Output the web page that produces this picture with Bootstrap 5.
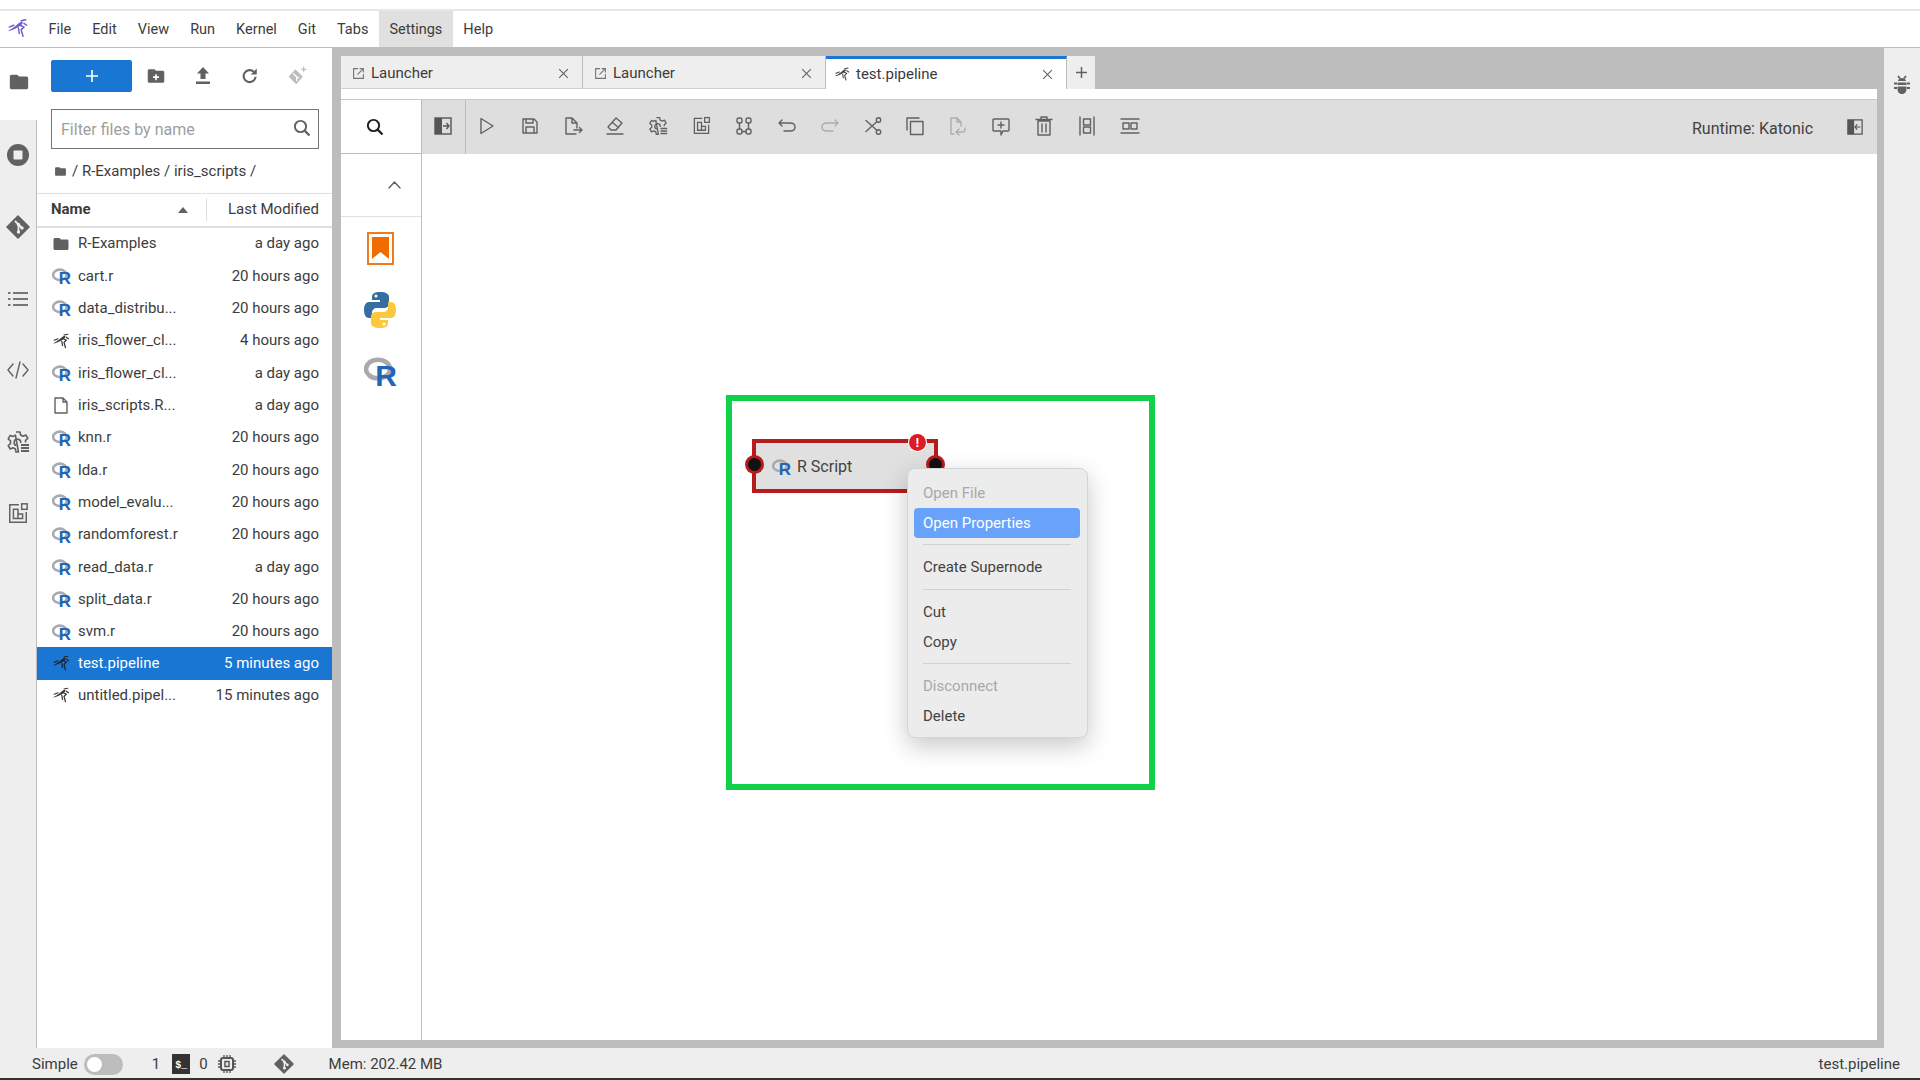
<!DOCTYPE html>
<html lang="en">

<head>
    <meta charset="UTF-8">
    <title>test.pipeline</title>
    <link href="https://cdn.jsdelivr.net/npm/bootstrap@5.3.0/dist/css/bootstrap.min.css" rel="stylesheet">
    <style>
        html, body { height: 100%; }
        body { font-family: Roboto, "Liberation Sans", sans-serif; font-size: 15px; color: #3c3c3c; background: #fff; overflow: hidden; }
        .app { height: 1080px; width: 1920px; }
        .top-strip { height: 11px; border-bottom: 2px solid #e8e8e8; }
        .menu-bar { height: 37px; border-bottom: 1px solid #bdbdbd; padding-left: 38px; position: relative; font-size: 14.5px; }
        .menu-bar .logo { position: absolute; left: 5px; top: 6px; width: 25px; height: 22px; }
        .menu-bar .nav-link { color: #3c3c3c; padding: 1px 10.5px 0; height: 36px; line-height: 36px; }
        .menu-bar .nav-link.open { background: #e0e0e0; }
        .work { height: 1000px; background: #bdbdbd; }
        .rail { width: 37px; background: #eee; }
        .rail-item { height: 71.6px; border-right: 1px solid #bdbdbd; }
        .rail-item.on { background: #fff; border-right: 0; padding-bottom: 3px; }
        .rail-fill { border-right: 1px solid #bdbdbd; }
        .rail-right { width: 36px; background: #eee; padding-top: 27px; }
        .side { width: 295px; background: #fff; }
        .side-tools { height: 61px; padding: 12px 0 0 14px; }
        .new-btn { width: 81px; height: 32px; padding: 0; border-radius: 2px; background: #1976d2; border-color: #1976d2; }
        .tool-cell { width: 47px; height: 32px; }
        .filter-box { margin: 0 13px 0 14px; height: 40px; }
        .filter-box .form-control { height: 40px; border: 1px solid #757575; border-radius: 0; font-size: 16px; padding: 0 30px 0 9px; color: #3c3c3c; }
        .filter-box .form-control::placeholder { color: #9e9e9e; }
        .filter-glass { position: absolute; right: 8px; top: 10px; }
        .crumbs { height: 44px; padding-left: 17px; gap: 5px; }
        .head-row { height: 35px; border-top: 1px solid #e0e0e0; border-bottom: 2px solid #e0e0e0; padding-bottom: 1px; }
        .head-name { width: 169px; padding: 0 18px 0 14px; font-weight: 700; }
        .head-date { flex: 1; border-left: 1px solid #e0e0e0; padding-right: 13px; text-align: right; }
        .caret-up { width: 0; height: 0; border-left: 5px solid transparent; border-right: 5px solid transparent; border-bottom: 6px solid #616161; }
        .files .list-group-item { height: 32.33px; border: 0; border-radius: 0; padding: 0 13px 1px 15px; color: #3c3c3c; background: transparent; gap: 8px; }
        .files .list-group-item.active { background: #1976d2; color: #fff; }
        .file-stamp { margin-left: auto; }
        .r-icon { position: relative; display: block; flex: none; width: 18px; height: 18px; }
        .r-icon svg { display: block; }
        .r-icon b { position: absolute; right: -1px; bottom: -1px; font: 700 17px/14px "Liberation Sans", sans-serif; color: #2165b6; }
        .r-icon.large { width: 32px; height: 32px; }
        .r-icon.large b { font-size: 30px; line-height: 24px; }
        .dock { width: 1536px; margin: 8px 7px 8px 9px; min-width: 0; }
        .tabs-row { height: 33.5px; }
        .doc-tab { width: 242px; background: #eee; border-right: 1px solid #bdbdbd; border-bottom: 1px solid #d0d0d0; padding: 3px 12px 0 11px; gap: 6px; }
        .doc-tab.second { width: 243px; }
        .doc-tab.on { background: #fff; border-top: 3px solid #1976d2; border-bottom: 0; padding: 0 12px 0 8px; width: 241px; }
        .doc-tab .tab-x { margin-left: auto; }
        .add-tab { width: 28px; background: #eee; }
        .tab-gap { height: 10.5px; background: #fff; border-bottom: 1px solid #c8c8c8; }
        .doc-body { height: 948px; background: #fff; min-height: 0; }
        .palette { width: 81px; border-right: 1px solid #bdbdbd; }
        .pal-search { height: 54px; border-bottom: 1px solid #bdbdbd; padding: 2px 12px 0 0; }
        .pal-fold { height: 63px; border-bottom: 1px solid #e0e0e0; padding-right: 20px; }
        .pal-icons { padding: 15px 2px 0 0; gap: 26px; }
        .pipe-bar { height: 54px; background: #dedede; }
        .bar-btn { width: 42.85px; height: 100%; padding-bottom: 2px; }
        .bar-btn.first { border-right: 1px solid #bdbdbd; width: 43.5px; }
        .runtime { margin-left: auto; font-size: 16px; color: #424242; margin-right: 34px; padding-top: 5px; }
        .bar-end { margin-right: 14px; }
        .canvas-area { position: relative; flex: 1; background: #fff; }
        .green-box { position: absolute; left: 304px; top: 241px; width: 429px; height: 395px; border: 6px solid #10d14a; }
        .pipe-node { position: absolute; left: 330px; top: 285px; width: 186px; height: 54px; background: #e0e0e0; border: 4px solid #b71c1c; padding: 2px 0 0 16px; gap: 7px; font-size: 16px; color: #424242; }
        .port { position: absolute; width: 13px; height: 13px; border-radius: 50%; background: #111; box-shadow: 0 0 0 3px #b71c1c; top: 15px; }
        .port.in { left: -8px; }
        .port.out { right: -8px; }
        .node-alert { position: absolute; right: 8px; top: -9px; width: 17px; height: 17px; border-radius: 50%; background: #da1e28; color: #fff; font: 700 13px/17px "Liberation Sans", sans-serif; text-align: center; box-shadow: 0 0 0 1px #fff; }
        .ctx-menu.dropdown-menu { position: absolute; left: 485px; top: 314px; width: 181px; height: 270px; min-width: 0; padding: 9px 7px 8px 6px; margin: 0; background: #ececec; border: 1px solid #d4d4d4; border-radius: 8px; box-shadow: 0 8px 24px rgba(0, 0, 0, .22); font-size: 15px; }
        .ctx-menu .dropdown-item { height: 30px; line-height: 30px; padding: 0 9px; color: #424242; border-radius: 4px; }
        .ctx-menu .dropdown-item.active { background: #69a2fa; color: #fff; }
        .ctx-menu .dropdown-item.disabled { color: #a8a8a8; }
        .ctx-menu .dropdown-divider { margin: 6.5px 9px 7px; border-color: #d2d2d2; opacity: 1; }
        .status-bar { height: 32px; background: #eee; border-bottom: 2px solid #333; padding: 2px 20px 0 32px; }
        .switch-track { width: 39px; height: 21px; border-radius: 11px; background: #bdbdbd; margin-left: 6px; padding-left: 2px; }
        .switch-knob { width: 15px; height: 15px; border-radius: 50%; background: #fff; margin-left: 1px; }
        .kernel-count { margin-left: 29px; }
        .term-icon { width: 18px; height: 20px; background: #333; color: #fff; font: 700 10px/24px "Liberation Mono", monospace; text-align: center; margin: 0 9px 0 12px; }
        .chip-icon { margin-left: 10px; }
        .git-status { margin-left: 38px; }
        .mem-use { margin-left: 35px; }
        .ico { stroke: #616161; fill: none; stroke-width: 1.4; stroke-linecap: round; stroke-linejoin: round; }
        .ico.faint { stroke: #adadad; }
        .solid { fill: #616161; stroke: none; }
    </style>
</head>

<body>
    <svg width="0" height="0" class="position-absolute">
        <symbol id="i-folder" viewBox="0 0 24 24"><path d="M10 4H4c-1.100 0-2 .9-2 2v12c0 1.100.9 2 2 2h16c1.100 0 2-.9 2-2V8c0-1.100-.9-2-2-2h-8l-2-2z"/></symbol>
        <symbol id="i-runner" viewBox="0 0 24 24">
            <path d="M1 15c4-1 7-4 10-6 2-2 4-4 7-4l-1 3-4 3-4 2-5 2z" stroke="none"/>
            <path d="M16 4l5-1M19 7l3 2M15 9l4 2-3 3 2 7M13 12l1 6M3 11l5-2" fill="none" stroke="currentColor" stroke-width="1.600" stroke-linecap="round"/>
        </symbol>
        <symbol id="i-ring" viewBox="0 0 24 24"><ellipse cx="10.500" cy="10.500" rx="9" ry="7" fill="none" stroke="#a8aab0" stroke-width="3.400"/></symbol>
        <symbol id="i-git" viewBox="0 0 24 24">
            <path d="M12 1l11 11-11 11L1 12z" fill="#616161" stroke="#616161" stroke-width="1.500" stroke-linejoin="round"/>
            <path d="M9 6l3.500 3.500v7M12.500 9.500l3.500 3.500" stroke="#eee" stroke-width="1.800" fill="none"/>
            <circle cx="12.500" cy="17" r="1.700" fill="#eee"/><circle cx="16" cy="13" r="1.700" fill="#eee"/><circle cx="12.500" cy="9.500" r="1.700" fill="#eee"/>
        </symbol>
        <symbol id="i-gear" viewBox="0 0 24 24">
            <path d="M10 2h4l.6 3 2.400 1.200 2.800-1.200 2 3.500-2.300 1.900v2M12.500 22H10l-.6-3-2.400-1.200-2.800 1.200-2-3.500L4.500 13.600v-2.800L2.200 8.900l2-3.500L7 6.400 9.400 5.200z" fill="none" stroke="#616161" stroke-width="1.600" stroke-linejoin="round"/>
            <path d="M14.700 13a3.300 3.300 0 1 0-4.200 2.600" fill="none" stroke="#616161" stroke-width="1.600"/>
            <path d="M15 15h8M15 18h8M15 21h8" stroke="#616161" stroke-width="2"/>
        </symbol>
        <symbol id="i-widget" viewBox="0 0 24 24">
            <path d="M13 3H3v19h18V11" fill="none" stroke="#616161" stroke-width="1.600"/>
            <rect x="16" y="2" width="6" height="6" fill="none" stroke="#616161" stroke-width="1.600"/>
            <path d="M7 8v10h10v-5h-5V8z" fill="none" stroke="#616161" stroke-width="1.600"/>
            <path d="M12 13v5" stroke="#616161" stroke-width="1.600"/>
        </symbol>
        <symbol id="i-x" viewBox="0 0 24 24"><path d="M4 4l16 16M20 4L4 20" fill="none" stroke="#616161" stroke-width="2"/></symbol>
        <symbol id="i-launch" viewBox="0 0 24 24">
            <path d="M11 3H3v18h18v-8" fill="none" stroke="#757575" stroke-width="2"/>
            <path d="M14 3h7v7M21 3L10 14" fill="none" stroke="#757575" stroke-width="2"/>
        </symbol>
        <symbol id="i-glass" viewBox="0 0 24 24"><circle cx="10" cy="10" r="7.500" fill="none" stroke="currentColor" stroke-width="2.600"/><path d="M15.500 15.500L22 22" stroke="currentColor" stroke-width="3"/></symbol>
    </svg>

    <div class="app d-flex flex-column">
        <div class="top-strip"></div>
        <nav class="menu-bar nav">
            <svg class="logo" viewBox="0 0 24 24" fill="#6f5bd0" color="#6f5bd0"><use href="#i-runner"/></svg>
            <a class="nav-link" href="#">File</a>
            <a class="nav-link" href="#">Edit</a>
            <a class="nav-link" href="#">View</a>
            <a class="nav-link" href="#">Run</a>
            <a class="nav-link" href="#">Kernel</a>
            <a class="nav-link" href="#">Git</a>
            <a class="nav-link" href="#">Tabs</a>
            <a class="nav-link open" href="#">Settings</a>
            <a class="nav-link" href="#">Help</a>
        </nav>

        <div class="work d-flex">
            <div class="rail d-flex flex-column">
                <div class="rail-item on d-flex align-items-center justify-content-center"><svg width="22" height="22" fill="#616161"><use href="#i-folder"/></svg></div>
                <div class="rail-item d-flex align-items-center justify-content-center">
                    <svg width="24" height="24" viewBox="0 0 24 24"><circle cx="12" cy="12" r="11" fill="#616161"/><rect x="7.500" y="7.500" width="9" height="9" rx="1" fill="#eee"/></svg>
                </div>
                <div class="rail-item d-flex align-items-center justify-content-center"><svg width="24" height="24"><use href="#i-git"/></svg></div>
                <div class="rail-item d-flex align-items-center justify-content-center">
                    <svg width="22" height="22" viewBox="0 0 22 22"><path d="M6 5h15M6 11h15M6 17h15" stroke="#757575" stroke-width="2"/><path d="M1 5h2.500M1 11h2.500M1 17h2.500" stroke="#757575" stroke-width="2"/></svg>
                </div>
                <div class="rail-item d-flex align-items-center justify-content-center">
                    <svg width="22" height="22" viewBox="0 0 22 22" class="ico"><path d="M6 5l-5 6 5 6M16 5l5 6-5 6M13 3L9 19"/></svg>
                </div>
                <div class="rail-item d-flex align-items-center justify-content-center"><svg width="24" height="24"><use href="#i-gear"/></svg></div>
                <div class="rail-item d-flex align-items-center justify-content-center"><svg width="22" height="22"><use href="#i-widget"/></svg></div>
                <div class="rail-fill flex-grow-1"></div>
            </div>

            <div class="side d-flex flex-column">
                <div class="side-tools d-flex">
                    <button class="btn btn-primary new-btn d-flex align-items-center justify-content-center">
                        <svg width="14" height="14" viewBox="0 0 14 14"><path d="M7 1v12M1 7h12" stroke="#fff" stroke-width="1.600"/></svg>
                    </button>
                    <span class="tool-cell d-flex align-items-center justify-content-center">
                        <svg width="18" height="18" viewBox="0 0 24 24"><path class="solid" d="M10 3H3c-1.100 0-2 .9-2 2v14c0 1.100.9 2 2 2h18c1.100 0 2-.9 2-2V7c0-1.100-.9-2-2-2h-9z"/><path d="M12 9.500v8M8 13.500h8" stroke="#fff" stroke-width="2.200"/></svg>
                    </span>
                    <span class="tool-cell d-flex align-items-center justify-content-center">
                        <svg width="16" height="18" viewBox="0 0 16 18"><path class="solid" d="M8 0l6 6.500h-3.500V12h-5V6.500H2zM1 14.500h14V17H1z"/></svg>
                    </span>
                    <span class="tool-cell d-flex align-items-center justify-content-center">
                        <svg width="18" height="18" viewBox="0 0 24 24" fill="none"><path d="M19.500 13a8 8 0 1 1-2.300-6.500" stroke="#616161" stroke-width="2.800"/><path class="solid" d="M21 2v8h-8z"/></svg>
                    </span>
                    <span class="tool-cell d-flex align-items-center justify-content-center">
                        <svg width="20" height="20" viewBox="0 0 24 24"><path d="M10 4l9 9-8 9-9-9z" fill="#bdbdbd"/><path d="M7.500 9l4 4v5M11.500 13l3 1.500" stroke="#fff" stroke-width="1.500" fill="none"/><path d="M20 1v6M17 4h6" stroke="#bdbdbd" stroke-width="1.500"/></svg>
                    </span>
                </div>
                <div class="filter-box position-relative">
                    <input type="text" class="form-control" placeholder="Filter files by name">
                    <svg class="filter-glass" width="18" height="18" color="#616161"><use href="#i-glass"/></svg>
                </div>
                <div class="crumbs d-flex align-items-center">
                    <svg width="13" height="13" fill="#616161"><use href="#i-folder"/></svg>
                    <span>/ R-Examples / iris_scripts /</span>
                </div>
                <div class="head-row d-flex align-items-center">
                    <div class="head-name d-flex align-items-center justify-content-between"><span>Name</span><span class="caret-up"></span></div>
                    <div class="head-date">Last Modified</div>
                </div>
                <div class="files list-group list-group-flush">
                    <div class="list-group-item d-flex align-items-center"><svg width="18" height="18" fill="#616161"><use href="#i-folder"/></svg><span>R-Examples</span><span class="file-stamp">a day ago</span></div>
                    <div class="list-group-item d-flex align-items-center"><span class="r-icon"><svg width="18" height="18"><use href="#i-ring"/></svg><b>R</b></span><span>cart.r</span><span class="file-stamp">20 hours ago</span></div>
                    <div class="list-group-item d-flex align-items-center"><span class="r-icon"><svg width="18" height="18"><use href="#i-ring"/></svg><b>R</b></span><span>data_distribu...</span><span class="file-stamp">20 hours ago</span></div>
                    <div class="list-group-item d-flex align-items-center"><svg width="18" height="18" fill="#333" color="#333"><use href="#i-runner"/></svg><span>iris_flower_cl...</span><span class="file-stamp">4 hours ago</span></div>
                    <div class="list-group-item d-flex align-items-center"><span class="r-icon"><svg width="18" height="18"><use href="#i-ring"/></svg><b>R</b></span><span>iris_flower_cl...</span><span class="file-stamp">a day ago</span></div>
                    <div class="list-group-item d-flex align-items-center"><svg width="18" height="18" viewBox="0 0 18 18" class="ico"><path d="M3 2h8l4 4v11H3zM11 2v4h4"/></svg><span>iris_scripts.R...</span><span class="file-stamp">a day ago</span></div>
                    <div class="list-group-item d-flex align-items-center"><span class="r-icon"><svg width="18" height="18"><use href="#i-ring"/></svg><b>R</b></span><span>knn.r</span><span class="file-stamp">20 hours ago</span></div>
                    <div class="list-group-item d-flex align-items-center"><span class="r-icon"><svg width="18" height="18"><use href="#i-ring"/></svg><b>R</b></span><span>lda.r</span><span class="file-stamp">20 hours ago</span></div>
                    <div class="list-group-item d-flex align-items-center"><span class="r-icon"><svg width="18" height="18"><use href="#i-ring"/></svg><b>R</b></span><span>model_evalu...</span><span class="file-stamp">20 hours ago</span></div>
                    <div class="list-group-item d-flex align-items-center"><span class="r-icon"><svg width="18" height="18"><use href="#i-ring"/></svg><b>R</b></span><span>randomforest.r</span><span class="file-stamp">20 hours ago</span></div>
                    <div class="list-group-item d-flex align-items-center"><span class="r-icon"><svg width="18" height="18"><use href="#i-ring"/></svg><b>R</b></span><span>read_data.r</span><span class="file-stamp">a day ago</span></div>
                    <div class="list-group-item d-flex align-items-center"><span class="r-icon"><svg width="18" height="18"><use href="#i-ring"/></svg><b>R</b></span><span>split_data.r</span><span class="file-stamp">20 hours ago</span></div>
                    <div class="list-group-item d-flex align-items-center"><span class="r-icon"><svg width="18" height="18"><use href="#i-ring"/></svg><b>R</b></span><span>svm.r</span><span class="file-stamp">20 hours ago</span></div>
                    <div class="list-group-item active d-flex align-items-center"><svg width="18" height="18" fill="#222" color="#222"><use href="#i-runner"/></svg><span>test.pipeline</span><span class="file-stamp">5 minutes ago</span></div>
                    <div class="list-group-item d-flex align-items-center"><svg width="18" height="18" fill="#333" color="#333"><use href="#i-runner"/></svg><span>untitled.pipel...</span><span class="file-stamp">15 minutes ago</span></div>
                </div>
            </div>

            <div class="dock d-flex flex-column">
                <div class="tabs-row d-flex">
                    <div class="doc-tab d-flex align-items-center"><svg width="13" height="13"><use href="#i-launch"/></svg><span>Launcher</span><svg class="tab-x" width="13" height="13"><use href="#i-x"/></svg></div>
                    <div class="doc-tab second d-flex align-items-center"><svg width="13" height="13"><use href="#i-launch"/></svg><span>Launcher</span><svg class="tab-x" width="13" height="13"><use href="#i-x"/></svg></div>
                    <div class="doc-tab on d-flex align-items-center"><svg width="16" height="16" fill="#444" color="#444"><use href="#i-runner"/></svg><span>test.pipeline</span><svg class="tab-x" width="13" height="13"><use href="#i-x"/></svg></div>
                    <div class="add-tab d-flex align-items-center justify-content-center"><svg width="13" height="13" viewBox="0 0 13 13"><path d="M6.500 1v11M1 6.500h11" stroke="#616161" stroke-width="1.500"/></svg></div>
                </div>
                <div class="tab-gap"></div>
                <div class="doc-body d-flex">
                    <div class="palette d-flex flex-column">
                        <div class="pal-search d-flex align-items-center justify-content-center"><svg width="18" height="18" color="#1f1f1f"><use href="#i-glass"/></svg></div>
                        <div class="pal-fold d-flex align-items-center justify-content-end">
                            <svg width="13" height="8" viewBox="0 0 13 8" class="ico"><path d="M1 7l5.500-6L12 7"/></svg>
                        </div>
                        <div class="pal-icons d-flex flex-column align-items-center">
                            <svg width="27" height="33" viewBox="0 0 27 33"><rect x="1" y="1" width="25" height="31" fill="#fff" stroke="#f07a1c" stroke-width="2"/><path d="M5 5h17v22l-8.500-7L5 27z" fill="#f06c00"/></svg>
                            <svg width="32" height="38" viewBox="0 0 32 38"><path d="M16 1c-6 0-8 2-8 5v3h8v2H5c-3 0-5 3-5 8s2 8 5 8h3v-5c0-3 2-5 5-5h7c3 0 5-2 5-5V6c0-3-3-5-9-5z" fill="#366f9f"/><path d="M16 37c6 0 8-2 8-5v-3h-8v-2h11c3 0 5-3 5-8s-2-8-5-8h-3v5c0 3-2 5-5 5h-7c-3 0-5 2-5 5v6c0 3 3 5 9 5z" fill="#fdc93c"/><circle cx="12" cy="5" r="1.500" fill="#fff"/><circle cx="20" cy="33" r="1.500" fill="#fff"/></svg>
                            <span class="r-icon large"><svg width="32" height="32"><use href="#i-ring"/></svg><b>R</b></span>
                        </div>
                    </div>
                    <div class="d-flex flex-column flex-grow-1">
                        <div class="pipe-bar d-flex align-items-center">
                            <span class="bar-btn first d-flex align-items-center justify-content-center"><svg width="18" height="18" viewBox="0 0 18 18"><rect x="1" y="1" width="16" height="16" fill="none" stroke="#555" stroke-width="1.400"/><rect x="1" y="1" width="7" height="16" fill="#555"/><path d="M9 9h6M12.500 6l2.500 3-2.500 3" fill="none" stroke="#555" stroke-width="1.300"/></svg></span>
                            <span class="bar-btn d-flex align-items-center justify-content-center"><svg width="20" height="20" viewBox="0 0 20 20" class="ico"><path d="M4 2.500v15L16 10z"/></svg></span>
                            <span class="bar-btn d-flex align-items-center justify-content-center"><svg width="20" height="20" viewBox="0 0 20 20" class="ico"><path d="M3 3h11l3 3v11H3zM6 3v4h7V3M6 17v-6h8v6"/></svg></span>
                            <span class="bar-btn d-flex align-items-center justify-content-center"><svg width="20" height="20" viewBox="0 0 20 20" class="ico"><path d="M14 12V7l-5-5H3v16h10M9 2v5h5M11 14h8M16.500 11.500L19 14l-2.500 2.500"/></svg></span>
                            <span class="bar-btn d-flex align-items-center justify-content-center"><svg width="20" height="20" viewBox="0 0 20 20" class="ico"><path d="M11 2l6 5-6 7-5 0-3-3zM7.500 6.500l6 5M2 18h16"/></svg></span>
                            <span class="bar-btn d-flex align-items-center justify-content-center"><svg width="20" height="20"><use href="#i-gear"/></svg></span>
                            <span class="bar-btn d-flex align-items-center justify-content-center"><svg width="19" height="19"><use href="#i-widget"/></svg></span>
                            <span class="bar-btn d-flex align-items-center justify-content-center"><svg width="20" height="20" viewBox="0 0 20 20" class="ico"><rect x="3" y="2" width="5" height="5" rx="2"/><rect x="12" y="2" width="5" height="5" rx="2"/><rect x="3" y="13" width="5" height="5" rx="2"/><rect x="12" y="13" width="5" height="5" rx="2"/><path d="M5.500 7v6M14.500 7v6M8 15.500h4"/></svg></span>
                            <span class="bar-btn d-flex align-items-center justify-content-center"><svg width="20" height="20" viewBox="0 0 20 20" class="ico"><path d="M5 4L2 7l3 3M2 7h11c3 0 5 1.500 5 4s-2 4-5 4H7"/></svg></span>
                            <span class="bar-btn d-flex align-items-center justify-content-center"><svg width="20" height="20" viewBox="0 0 20 20" class="ico faint"><path d="M15 4l3 3-3 3M18 7H7c-3 0-5 1.500-5 4s2 4 5 4h6"/></svg></span>
                            <span class="bar-btn d-flex align-items-center justify-content-center"><svg width="20" height="20" viewBox="0 0 20 20" class="ico"><circle cx="15.500" cy="4" r="2.200"/><circle cx="15.500" cy="16" r="2.200"/><path d="M3 4.500l10.800 9.700M3 15.500l10.800-9.700"/></svg></span>
                            <span class="bar-btn d-flex align-items-center justify-content-center"><svg width="20" height="20" viewBox="0 0 20 20" class="ico"><path d="M2 14V2h12"/><rect x="5.500" y="5.500" width="12.500" height="13"/></svg></span>
                            <span class="bar-btn d-flex align-items-center justify-content-center"><svg width="20" height="20" viewBox="0 0 20 20" class="ico faint"><path d="M6 18H3V2h6l4 4v4M9 2v4h4M11 13l-3 3 3 3M8 16h6c2 0 3-1 3-3v-1"/></svg></span>
                            <span class="bar-btn d-flex align-items-center justify-content-center"><svg width="20" height="20" viewBox="0 0 20 20" class="ico"><path d="M3 3h14c.6 0 1 .4 1 1v10c0 .6-.4 1-1 1h-5l-2 4v-4H3c-.6 0-1-.4-1-1V4c0-.6.4-1 1-1zM10 6v6M7 9h6"/></svg></span>
                            <span class="bar-btn d-flex align-items-center justify-content-center"><svg width="20" height="20" viewBox="0 0 20 20" class="ico"><path d="M4 5h12v14H4zM2 3.500h16M7 3.500V1h6v2.500M8 8v8M12 8v8"/></svg></span>
                            <span class="bar-btn d-flex align-items-center justify-content-center"><svg width="20" height="20" viewBox="0 0 20 20" class="ico"><path d="M3 1v18M17 1v18"/><rect x="6.500" y="3" width="7" height="6"/><rect x="6.500" y="11" width="7" height="6"/></svg></span>
                            <span class="bar-btn d-flex align-items-center justify-content-center"><svg width="20" height="20" viewBox="0 0 20 20" class="ico"><path d="M1 3h18M1 17h18"/><rect x="3" y="7" width="6" height="6"/><rect x="11" y="7" width="6" height="6"/></svg></span>
                            <span class="runtime">Runtime: Katonic</span>
                            <svg class="bar-end" width="16" height="16" viewBox="0 0 18 18"><rect x="1" y="1" width="16" height="16" fill="none" stroke="#555" stroke-width="1.400"/><rect x="1" y="1" width="7" height="16" fill="#555"/><path d="M15 9H9M11.500 6L9 9l2.500 3" fill="none" stroke="#555" stroke-width="1.300"/></svg>
                        </div>
                        <div class="canvas-area">
                            <div class="green-box"></div>
                            <div class="pipe-node d-flex align-items-center">
                                <span class="port in"></span>
                                <span class="r-icon"><svg width="18" height="18"><use href="#i-ring"/></svg><b>R</b></span>
                                <span>R Script</span>
                                <span class="node-alert">!</span>
                                <span class="port out"></span>
                            </div>
                            <ul class="ctx-menu dropdown-menu show list-unstyled">
                                <li><a class="dropdown-item disabled" href="#">Open File</a></li>
                                <li><a class="dropdown-item active" href="#">Open Properties</a></li>
                                <li><hr class="dropdown-divider"></li>
                                <li><a class="dropdown-item" href="#">Create Supernode</a></li>
                                <li><hr class="dropdown-divider"></li>
                                <li><a class="dropdown-item" href="#">Cut</a></li>
                                <li><a class="dropdown-item" href="#">Copy</a></li>
                                <li><hr class="dropdown-divider"></li>
                                <li><a class="dropdown-item disabled" href="#">Disconnect</a></li>
                                <li><a class="dropdown-item" href="#">Delete</a></li>
                            </ul>
                        </div>
                    </div>
                </div>
            </div>

            <div class="rail-right d-flex flex-column align-items-center">
                <svg width="16" height="20" viewBox="0 0 16 20"><path class="solid" d="M8 3c2.500 0 4 1.500 4 3H4c0-1.500 1.500-3 4-3zM3.500 7.500h9V10h-9zM3.500 11.500h9V14c0 3-2 5-4.500 5s-4.500-2-4.500-5z"/><path d="M4 1l2 2.500M12 1l-2 2.500M3 8.500H0M13 8.500h3M3 13H0M13 13h3" stroke="#616161" stroke-width="1.800"/></svg>
            </div>
        </div>

        <div class="status-bar d-flex align-items-center">
            <span>Simple</span>
            <span class="switch-track d-flex align-items-center"><span class="switch-knob"></span></span>
            <span class="kernel-count">1</span>
            <span class="term-icon">$_</span>
            <span>0</span>
            <svg class="chip-icon" width="18" height="18" viewBox="0 0 18 18"><rect x="3" y="3" width="12" height="12" rx="2" fill="none" stroke="#555" stroke-width="2"/><rect x="7" y="6.500" width="4" height="5" fill="none" stroke="#555" stroke-width="1.500"/><path d="M6 0v3M9 0v3M12 0v3M6 15v3M9 15v3M12 15v3M0 6h3M0 9h3M0 12h3M15 6h3M15 9h3M15 12h3" stroke="#555" stroke-width="1.300"/></svg>
            <svg class="git-status" width="20" height="20"><use href="#i-git"/></svg>
            <span class="mem-use">Mem: 202.42 MB</span>
            <span class="ms-auto">test.pipeline</span>
        </div>
    </div>

    <script src="https://cdn.jsdelivr.net/npm/bootstrap@5.3.0/dist/js/bootstrap.bundle.min.js"></script>
</body>

</html>
